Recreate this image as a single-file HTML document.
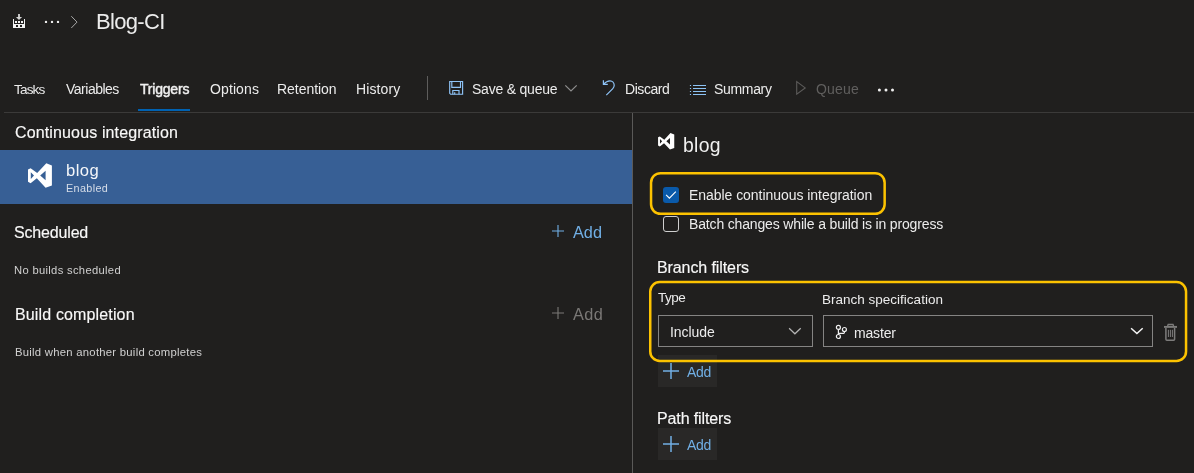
<!DOCTYPE html>
<html><head><meta charset="utf-8"><style>
html,body{margin:0;padding:0;width:1194px;height:473px;overflow:hidden;background:#201f1e;}
body{position:relative;font-family:"Liberation Sans",sans-serif;}
.t{position:absolute;white-space:nowrap;will-change:transform;}
.a{position:absolute;}
svg{position:absolute;overflow:visible;}
</style></head><body>
<!-- separators / panels -->
<div class="a" style="left:4px;top:112px;width:1190px;height:1px;background:#3b3a39"></div>
<div class="a" style="left:632px;top:113px;width:1px;height:360px;background:#5a5958"></div>
<div class="a" style="left:427px;top:76px;width:1px;height:24px;background:#5e5d5c"></div>
<div class="a" style="left:138px;top:109px;width:52px;height:2px;background:#0062b2"></div>
<div class="a" style="left:0;top:150px;width:632px;height:54px;background:#375f95"></div>
<!-- build icon -->
<svg style="left:10px;top:11px" width="18" height="20" viewBox="0 0 18 20">
 <rect x="8" y="3" width="2" height="3.2" fill="#c4c4c4"/>
 <polygon points="5.9,6.1 12.1,6.1 9,9.1" fill="#d4d4d4"/>
 <rect x="3" y="8" width="1" height="5" fill="#f2f2f2"/>
 <rect x="14" y="8" width="1" height="5" fill="#f2f2f2"/>
 <rect x="5" y="10" width="2" height="2" fill="#f2f2f2"/>
 <rect x="8" y="10" width="2" height="2" fill="#f2f2f2"/>
 <rect x="11" y="10" width="2" height="2" fill="#f2f2f2"/>
 <path d="M3 13H15V17H3Z M6 14V16H8V14Z M10 14V16H12V14Z" fill="#f2f2f2" fill-rule="evenodd"/>
</svg>
<!-- breadcrumb dots and chevron -->
<svg style="left:0;top:0" width="100" height="40" viewBox="0 0 100 40">
 <circle cx="46" cy="21.9" r="1.2" fill="#f0f0f0"/>
 <circle cx="52" cy="21.9" r="1.2" fill="#f0f0f0"/>
 <circle cx="58" cy="21.9" r="1.2" fill="#f0f0f0"/>
 <path d="M71.3 16.2 L77 22.1 L71.3 28" fill="none" stroke="#a8a8a8" stroke-width="1"/>
</svg>
<!-- save icon -->
<svg style="left:446px;top:78px" width="20" height="20" viewBox="0 0 20 20" fill="none" stroke="#8ec3f6" stroke-width="1.15">
 <path d="M3.7 3.5H16.6V16.2H4.6L3.7 15.3Z"/>
 <path d="M5.8 3.5V9.4H14.5V3.5"/>
 <path d="M6.8 16.2V12.5H13V16.2"/>
 <path d="M8.7 16.2V14.2"/>
</svg>
<svg style="left:560px;top:80px" width="20" height="16" viewBox="0 0 20 16">
 <path d="M5.3 5.4 L11 10.9 L16.7 5.4" fill="none" stroke="#8e8e8e" stroke-width="1.25"/>
</svg>
<!-- undo icon -->
<svg style="left:598px;top:76px" width="22" height="22" viewBox="0 0 22 22" fill="none" stroke="#8ec3f6" stroke-width="1.2">
 <path d="M5.4 4.2V8.4H9.8"/>
 <path d="M5.8 8.1C7.5 6 9.6 4.8 12 4.8C14.4 4.8 16.2 6.8 16.2 9.3C16.2 10.6 15.6 11.8 14.8 12.6L8.3 19.1"/>
</svg>
<!-- list icon -->
<svg style="left:686px;top:80px" width="24" height="20" viewBox="0 0 24 20" fill="none" stroke="#8cc3f5" stroke-width="1.1">
 <path d="M3.9 5.5H5.1M3.9 8.5H5.1M3.9 11.5H5.1M3.9 14.5H5.1"/>
 <path d="M7 5.5H20M7 8.5H20M7 11.5H20M7 14.5H20"/>
</svg>
<!-- play -->
<svg style="left:790px;top:76px" width="22" height="22" viewBox="0 0 22 22">
 <path d="M6.7 5.6V18.2L15.2 11.9Z" fill="none" stroke="#5c5b5a" stroke-width="1.1" stroke-linejoin="miter"/>
</svg>
<!-- more -->
<svg style="left:872px;top:80px" width="28" height="20" viewBox="0 0 28 20">
 <circle cx="7.4" cy="9.9" r="1.5" fill="#f0f0f0"/>
 <circle cx="14" cy="9.9" r="1.5" fill="#f0f0f0"/>
 <circle cx="20.5" cy="9.9" r="1.5" fill="#f0f0f0"/>
</svg>
<!-- VS icons -->
<svg style="left:28px;top:163px" width="24" height="25" viewBox="0 0 24 24.5">
 <path fill="#ffffff" fill-rule="evenodd" d="M0 6.3L2.6 5L9.2 9.8L18.3 0L23.9 2.2V22.2L17.6 24.5L8.8 15L2.6 19.9L0 18.6Z M2.8 9V15.7L6 12.3Z M17.6 7.4L12.2 12.3L17.6 17Z"/>
</svg>
<svg style="left:657.8px;top:132.7px" width="16.4" height="16.6" viewBox="0 0 24 24.5">
 <path fill="#ffffff" fill-rule="evenodd" d="M0 6.3L2.6 5L9.2 9.8L18.3 0L23.9 2.2V22.2L17.6 24.5L8.8 15L2.6 19.9L0 18.6Z M2.8 9V15.7L6 12.3Z M17.6 7.4L12.2 12.3L17.6 17Z"/>
</svg>
<!-- left panel plus icons -->
<svg style="left:550px;top:223px" width="16" height="16" viewBox="0 0 16 16">
 <path d="M8 2V14M2 8H14" stroke="#71afe5" stroke-width="1.1" fill="none"/>
</svg>
<svg style="left:550px;top:305px" width="16" height="16" viewBox="0 0 16 16">
 <path d="M8 2V14M2 8H14" stroke="#7a7876" stroke-width="1.1" fill="none"/>
</svg>
<!-- checkboxes -->
<div class="a" style="left:663px;top:187px;width:16px;height:16px;border-radius:3px;background:#0a5aaa"></div>
<svg style="left:659px;top:183px" width="24" height="24" viewBox="0 0 24 24">
 <path d="M7.1 11.9L10.4 15.2L16.8 8.7" fill="none" stroke="#ffffff" stroke-width="1.1"/>
</svg>
<div class="a" style="left:663px;top:216px;width:14px;height:14px;border-radius:3px;border:1px solid #cfcfcf"></div>
<!-- dropdowns -->
<div class="a" style="left:658px;top:315px;width:153px;height:30px;border:1px solid #858483"></div>
<div class="a" style="left:823px;top:315px;width:328px;height:30px;border:1px solid #858483"></div>
<svg style="left:785px;top:322px" width="20" height="16" viewBox="0 0 20 16">
 <path d="M4.1 6.2L9.9 11.8L15.7 6.2" fill="none" stroke="#b4b4b4" stroke-width="1.2"/>
</svg>
<svg style="left:1127px;top:322px" width="20" height="16" viewBox="0 0 20 16">
 <path d="M4.1 6.2L9.9 11.6L15.7 6.2" fill="none" stroke="#f4f4f4" stroke-width="1.5"/>
</svg>
<!-- branch icon -->
<svg style="left:830px;top:320px" width="22" height="22" viewBox="0 0 22 22" fill="none" stroke="#f0f0f0" stroke-width="1.2">
 <circle cx="8.4" cy="7.4" r="2"/>
 <circle cx="14.4" cy="9.5" r="2"/>
 <circle cx="8.4" cy="16.5" r="2"/>
 <path d="M8.4 9.4V14.5M14.4 11.5V12.6Q14.4 13.4 13.6 13.4H8.4"/>
</svg>
<!-- trash -->
<svg style="left:1158px;top:318px" width="26" height="26" viewBox="0 0 26 26" fill="none" stroke="#7d7c7b">
 <path d="M6 8.9H19" stroke-width="1.9"/>
 <path d="M9.6 8L10.2 6.5H15L15.6 8" stroke-width="1.4"/>
 <path d="M7.9 9.9V21.2Q7.9 22.2 8.9 22.2H15.6Q16.6 22.2 16.6 21.2V9.9" stroke-width="1.5"/>
 <path d="M10.4 11.8V19M12.4 11.8V19M14.4 11.8V19" stroke-width="1"/>
</svg>
<!-- add buttons -->
<div class="a" style="left:658px;top:355px;width:59px;height:32px;background:#292827"></div>
<div class="a" style="left:658px;top:428px;width:59px;height:32px;background:#292827"></div>
<svg style="left:655px;top:355px" width="32" height="32" viewBox="0 0 32 32">
 <path d="M16 8V24M8 16H24" stroke="#71afe5" stroke-width="1.5" fill="none"/>
</svg>
<svg style="left:655px;top:428px" width="32" height="32" viewBox="0 0 32 32">
 <path d="M16 8V24M8 16H24" stroke="#71afe5" stroke-width="1.5" fill="none"/>
</svg>
<!-- yellow highlight boxes -->
<svg style="left:0;top:0" width="1194" height="473" viewBox="0 0 1194 473">
 <rect x="651.05" y="173.15" width="233.6" height="40.7" rx="9.5" fill="none" stroke="#fcc200" stroke-width="2.5"/>
 <rect x="650.25" y="282.05" width="535.8" height="78.9" rx="9.5" fill="none" stroke="#fcc200" stroke-width="2.5"/>
</svg>

<div id="t_title" class="t" style="left:95.85px;top:11.21px;font-size:22.00px;line-height:22.00px;letter-spacing:-0.675px;color:#ececec;font-weight:400">Blog-CI</div>
<div id="t_tasks" class="t" style="left:14.15px;top:82.90px;font-size:13.60px;line-height:13.60px;letter-spacing:-0.845px;color:#ececec;font-weight:400">Tasks</div>
<div id="t_vars" class="t" style="left:65.70px;top:81.90px;font-size:14.00px;line-height:14.00px;letter-spacing:-0.495px;color:#ececec;font-weight:400">Variables</div>
<div id="t_trig" class="t" style="left:140.00px;top:81.90px;font-size:14.00px;line-height:14.00px;letter-spacing:-0.206px;color:#f0f0f0;font-weight:400;-webkit-text-stroke:0.45px #f0f0f0">Triggers</div>
<div id="t_opts" class="t" style="left:209.55px;top:81.90px;font-size:14.00px;line-height:14.00px;letter-spacing:0.105px;color:#ececec;font-weight:400">Options</div>
<div id="t_ret" class="t" style="left:277.45px;top:81.90px;font-size:14.00px;line-height:14.00px;letter-spacing:-0.034px;color:#ececec;font-weight:400">Retention</div>
<div id="t_hist" class="t" style="left:356.25px;top:81.90px;font-size:14.00px;line-height:14.00px;letter-spacing:0.120px;color:#ececec;font-weight:400">History</div>
<div id="t_save" class="t" style="left:471.60px;top:81.90px;font-size:14.00px;line-height:14.00px;letter-spacing:-0.213px;color:#ececec;font-weight:400">Save &amp; queue</div>
<div id="t_disc" class="t" style="left:624.70px;top:81.90px;font-size:14.00px;line-height:14.00px;letter-spacing:-0.435px;color:#ececec;font-weight:400">Discard</div>
<div id="t_summ" class="t" style="left:713.60px;top:81.90px;font-size:14.00px;line-height:14.00px;letter-spacing:-0.330px;color:#ececec;font-weight:400">Summary</div>
<div id="t_queue" class="t" style="left:815.60px;top:81.90px;font-size:14.00px;line-height:14.00px;letter-spacing:0.158px;color:#605f5e;font-weight:400">Queue</div>
<div id="t_ci" class="t" style="left:15.15px;top:124.50px;font-size:16.00px;line-height:16.00px;letter-spacing:0.137px;color:#f8f8f8;font-weight:400;-webkit-text-stroke:0.15px #f8f8f8">Continuous integration</div>
<div id="t_blog1" class="t" style="left:65.55px;top:163.21px;font-size:16.60px;line-height:16.60px;letter-spacing:0.450px;color:#f4f6f9;font-weight:400">blog</div>
<div id="t_enabled" class="t" style="left:65.55px;top:182.91px;font-size:10.80px;line-height:10.80px;letter-spacing:0.375px;color:#d6dde8;font-weight:400">Enabled</div>
<div id="t_sched" class="t" style="left:14.25px;top:224.90px;font-size:16.00px;line-height:16.00px;letter-spacing:-0.169px;color:#f8f8f8;font-weight:400;-webkit-text-stroke:0.15px #f8f8f8">Scheduled</div>
<div id="t_nobuild" class="t" style="left:14.25px;top:264.91px;font-size:11.20px;line-height:11.20px;letter-spacing:0.325px;color:#d0d0d0;font-weight:400">No builds scheduled</div>
<div id="t_add1" class="t" style="left:572.85px;top:224.01px;font-size:16.30px;line-height:16.30px;letter-spacing:-0.000px;color:#71afe5;font-weight:400">Add</div>
<div id="t_add2" class="t" style="left:572.85px;top:306.01px;font-size:16.30px;line-height:16.30px;letter-spacing:0.450px;color:#7a7876;font-weight:400">Add</div>
<div id="t_bc" class="t" style="left:14.55px;top:306.90px;font-size:16.00px;line-height:16.00px;letter-spacing:0.144px;color:#f8f8f8;font-weight:400;-webkit-text-stroke:0.15px #f8f8f8">Build completion</div>
<div id="t_bwhen" class="t" style="left:14.55px;top:347.21px;font-size:11.30px;line-height:11.30px;letter-spacing:0.259px;color:#d0d0d0;font-weight:400">Build when another build completes</div>
<div id="t_blog2" class="t" style="left:683.25px;top:135.70px;font-size:19.40px;line-height:19.40px;letter-spacing:0.300px;color:#f0f0f0;font-weight:400">blog</div>
<div id="t_eci" class="t" style="left:688.60px;top:187.91px;font-size:14.00px;line-height:14.00px;letter-spacing:-0.045px;color:#ececec;font-weight:400">Enable continuous integration</div>
<div id="t_batch" class="t" style="left:688.60px;top:216.91px;font-size:14.00px;line-height:14.00px;letter-spacing:-0.158px;color:#ececec;font-weight:400">Batch changes while a build is in progress</div>
<div id="t_bf" class="t" style="left:657.45px;top:260.10px;font-size:16.00px;line-height:16.00px;letter-spacing:-0.097px;color:#f8f8f8;font-weight:400;-webkit-text-stroke:0.15px #f8f8f8">Branch filters</div>
<div id="t_type" class="t" style="left:658.40px;top:290.71px;font-size:13.50px;line-height:13.50px;letter-spacing:-0.480px;color:#ececec;font-weight:400">Type</div>
<div id="t_bspec" class="t" style="left:822.25px;top:293.01px;font-size:13.50px;line-height:13.50px;letter-spacing:0.005px;color:#ececec;font-weight:400">Branch specification</div>
<div id="t_incl" class="t" style="left:670.40px;top:324.70px;font-size:14.00px;line-height:14.00px;letter-spacing:-0.045px;color:#ececec;font-weight:400">Include</div>
<div id="t_master" class="t" style="left:854.45px;top:325.81px;font-size:14.00px;line-height:14.00px;letter-spacing:-0.162px;color:#ececec;font-weight:400">master</div>
<div id="t_add3" class="t" style="left:687.45px;top:365.01px;font-size:14.00px;line-height:14.00px;letter-spacing:-0.315px;color:#71afe5;font-weight:400">Add</div>
<div id="t_pf" class="t" style="left:657.40px;top:410.90px;font-size:16.00px;line-height:16.00px;letter-spacing:-0.115px;color:#f8f8f8;font-weight:400;-webkit-text-stroke:0.15px #f8f8f8">Path filters</div>
<div id="t_add4" class="t" style="left:687.25px;top:438.20px;font-size:14.00px;line-height:14.00px;letter-spacing:-0.315px;color:#71afe5;font-weight:400">Add</div>
</body></html>
